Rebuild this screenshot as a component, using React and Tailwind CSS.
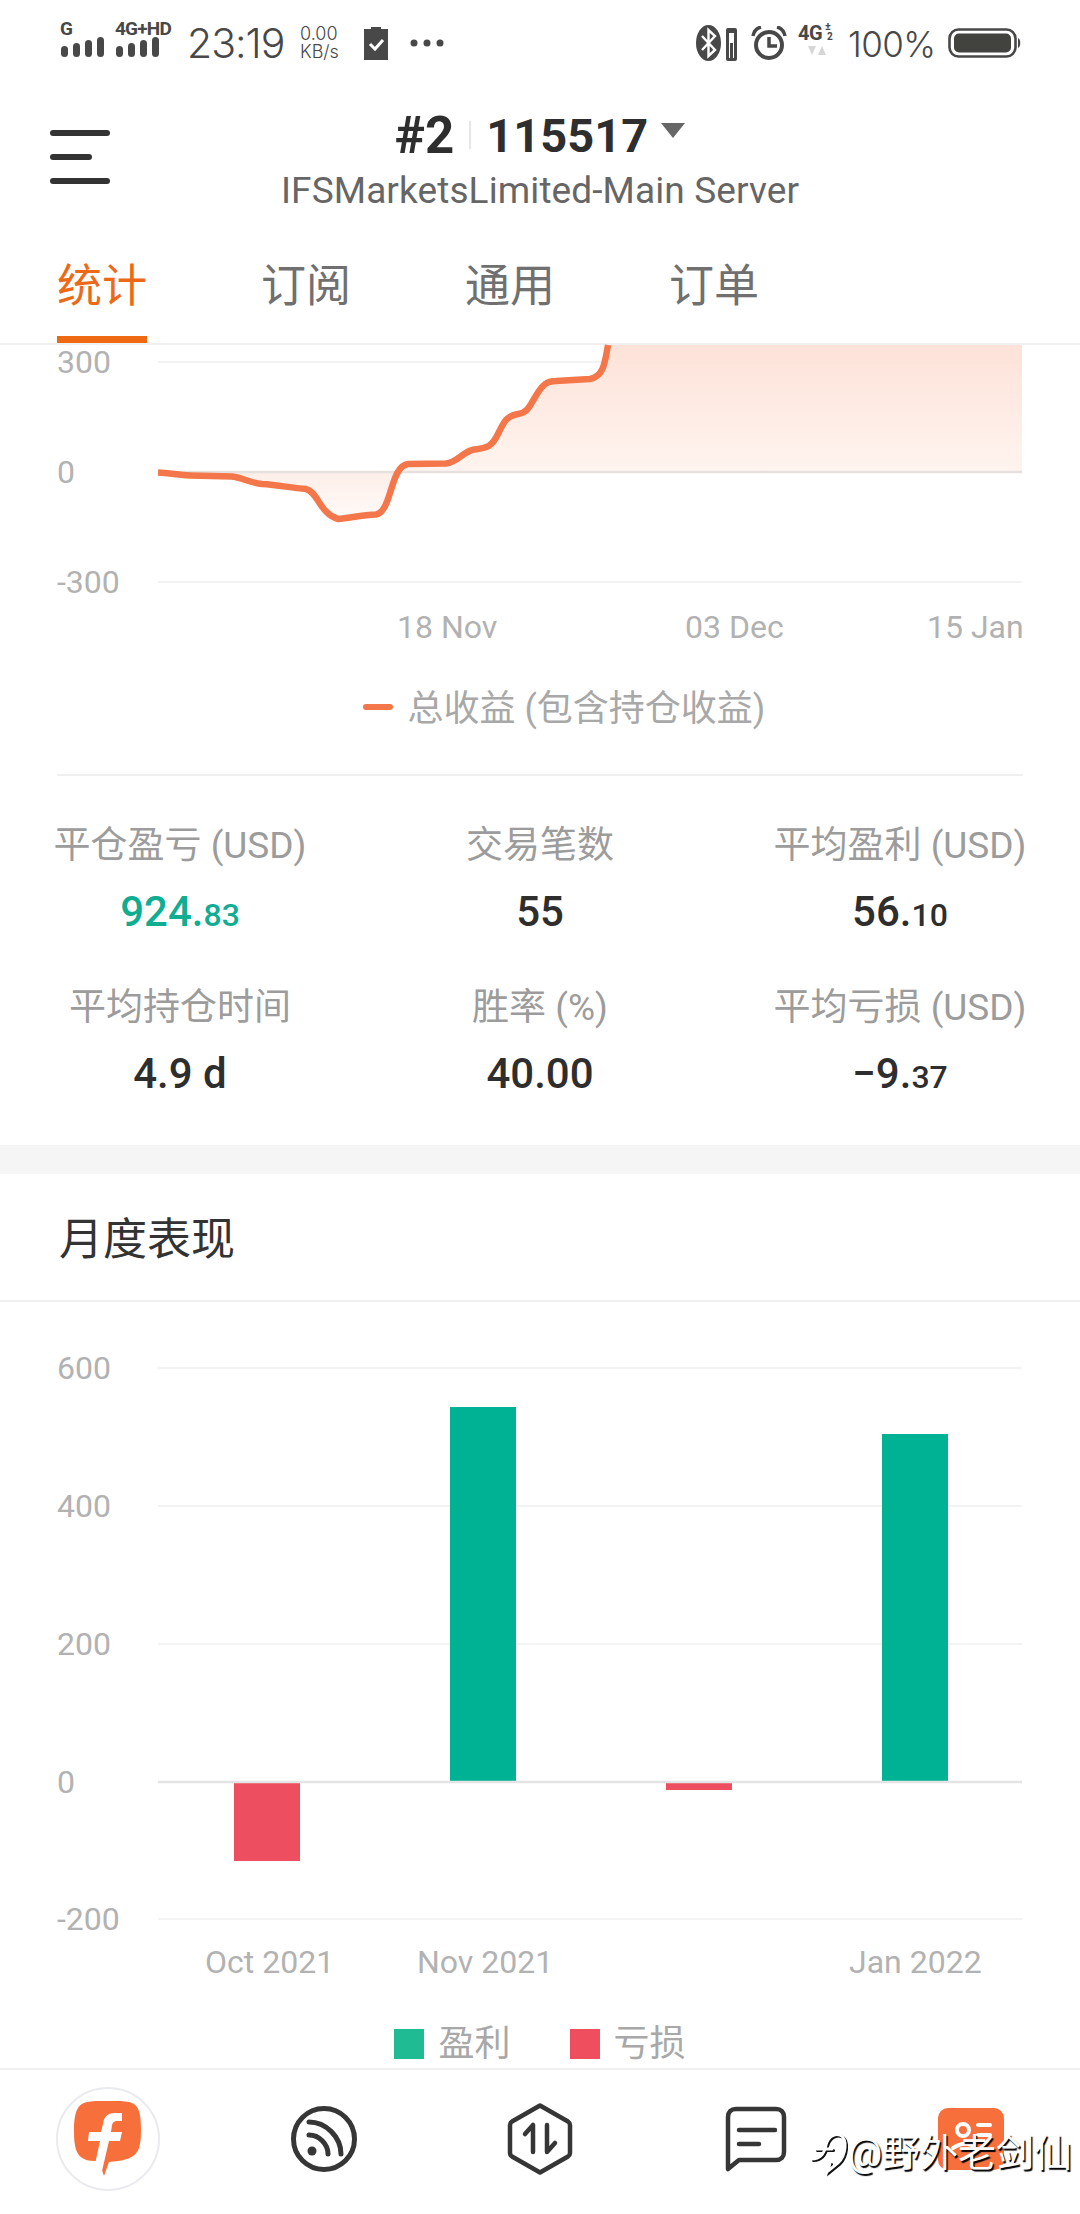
const font = "font-['Roboto','Noto_Sans_CJK_SC',sans-serif]";

const tabs = ["统计", "订阅", "通用", "订单"];

const stats = [
  { label: "平仓盈亏 (USD)", big: "924.", small: "83", green: true },
  { label: "交易笔数", big: "55" },
  { label: "平均盈利 (USD)", big: "56.", small: "10" },
  { label: "平均持仓时间", big: "4.9 d" },
  { label: "胜率 (%)", big: "40.00" },
  { label: "平均亏损 (USD)", big: "−9.", small: "37" },
];

const curve =
  "M158 472.5 C170 473 178 475 190 475.5 L232 476.5 C244 478 250 483 262 484 C280 485 290 488 306 489 C318 492 320 514 338 519 C350 518 362 515 376 514.5 C392 512 390 466 408 464 L446 463.5 C458 462 462 452 474 449.5 C488 448 492 446 498 434 C504 422 506 416 518 414 C528 413 530 405 537 394 C542 386 546 381 556 381 L590 379 C604 376 605 362 608 345";

function Signal({ x }) {
  return (
    <g fill="#484848">
      {[0, 1, 2, 3].map((i) => (
        <rect key={i} x={x + i * 12} y={46 - i * 3} width="7" height={11 + i * 3} rx="3.5" />
      ))}
    </g>
  );
}

function StatusBar() {
  return (
    <div className="h-[80px] flex items-center justify-between text-[#484848] shrink-0">
      <div className="flex items-center h-full">
        <div className="relative w-[187px] h-full">
          <svg className="absolute inset-0" width="187" height="80">
            <Signal x={61} />
            <Signal x={116} />
          </svg>
          <span className="absolute left-[60px] top-[19px] text-[19px] leading-[20px] font-bold">G</span>
          <span className="absolute left-[115px] top-[19px] text-[19px] leading-[20px] font-bold tracking-[-0.8px]">4G+HD</span>
        </div>
        <span className="text-[41px] leading-none w-[113px] font-['Inter',sans-serif] font-light tracking-[-1px] mt-[6px]">23:19</span>
        <div className="w-[64px] mt-[5px] text-[18px] leading-[18px] font-['Inter',sans-serif] font-light">
          <div>0.00</div>
          <div>KB/s</div>
        </div>
        <svg width="24" height="34" viewBox="0 0 24 34" className="mt-[6px]">
          <path d="M0 3h7V1h10v2h7v31H0z" fill="#484848" />
          <path d="M6 18l5 5 8-9" fill="none" stroke="#fff" strokeWidth="3" />
        </svg>
        <svg width="34" height="8" viewBox="0 0 34 8" className="ml-[22px] mt-[6px]">
          <circle cx="4" cy="4" r="3.5" fill="#484848" />
          <circle cx="17" cy="4" r="3.5" fill="#484848" />
          <circle cx="30" cy="4" r="3.5" fill="#484848" />
        </svg>
      </div>
      <div className="flex items-center h-full pr-[56px]">
        <svg width="42" height="36" viewBox="0 0 42 36" className="mt-[6px]">
          <ellipse cx="12.5" cy="18" rx="12.5" ry="18" fill="#484848" />
          <path d="M6 11l13 14-6.5 6V5l6.5 6L6 25" fill="none" stroke="#fff" strokeWidth="2.4" />
          <rect x="30" y="3" width="11" height="33" rx="2" fill="#484848" />
          <rect x="33" y="8" width="5" height="25" fill="#fff" />
          <rect x="34" y="18" width="3" height="15" fill="#484848" />
        </svg>
        <svg width="36" height="34" viewBox="0 0 36 34" className="ml-[13px] mt-[6px]">
          <circle cx="18" cy="19" r="13" fill="none" stroke="#484848" strokeWidth="4" />
          <path d="M18 11v9h8" fill="none" stroke="#484848" strokeWidth="3.5" />
          <path d="M2 10C3 5 6 2 10 1M34 10C33 5 30 2 26 1" fill="none" stroke="#484848" strokeWidth="3.5" />
        </svg>
        <div className="relative w-[36px] h-[36px] ml-[11px] mt-[2px]">
          <span className="absolute left-0 top-0 text-[20px] leading-[20px] font-bold tracking-[-0.5px]">4G</span>
          <span className="absolute left-[27px] -top-[2px] text-[11px] leading-[12px] font-bold">±</span>
          <span className="absolute left-[29px] top-[9px] text-[10px] leading-[10px] font-bold">2</span>
          <svg width="18" height="10" viewBox="0 0 18 10" className="absolute left-[10px] top-[23px]">
            <path d="M0 0h8l-4 9zM10 9l4-9 4 9z" fill="#d6d6d6" />
          </svg>
        </div>
        <span className="ml-[14px] w-[100px] text-[35px] leading-none font-['Inter',sans-serif] font-light tracking-[-0.6px] mt-[8px]">100%</span>
        <svg width="76" height="32" viewBox="0 0 76 32" className="mt-[8px]">
          <rect x="1.5" y="1.5" width="66" height="27" rx="9" fill="none" stroke="#484848" strokeWidth="2.6" />
          <rect x="6" y="5.5" width="57" height="19" rx="5" fill="#42433e" />
          <path d="M70 10c3 1 3 9 0 10z" fill="#484848" />
        </svg>
      </div>
    </div>
  );
}

function Header() {
  return (
    <div className="relative h-[160px] shrink-0 flex flex-col items-center">
      <div className="absolute left-[50px] top-[50px] flex flex-col gap-[18px]">
        <div className="w-[60px] h-[6px] rounded-full bg-[#333]" />
        <div className="w-[42px] h-[6px] rounded-full bg-[#333]" />
        <div className="w-[60px] h-[6px] rounded-full bg-[#333]" />
      </div>
      <div className="flex items-center h-[60px] mt-[25px] text-[#2e2e2e] text-[47px] font-bold leading-none">
        <span className="text-[51px]">#2</span>
        <div className="w-[2px] h-[28px] bg-[#e6e6e6] mx-[15px]" />
        <span>115517</span>
        <div className="ml-[13px] -mt-[10px] w-0 h-0 border-x-[12px] border-x-transparent border-t-[15px] border-t-[#666]" />
      </div>
      <div className="text-[#666] text-[37px] leading-[44px] mt-[4px] tracking-[0.1px]">IFSMarketsLimited-Main Server</div>
    </div>
  );
}

function Tabs() {
  return (
    <div className="h-[105px] shrink-0 border-b-2 border-[#f0f0f0] flex pl-[57px] gap-[114px]">
      {tabs.map((tab, i) => (
        <div key={tab} className={`relative w-[90px] h-[104px] text-[45px] text-center leading-[94px] ${i === 0 ? "text-[#ec6a17]" : "text-[#707070]"}`}>
          {tab}
          {i === 0 && <div className="absolute left-0 right-0 bottom-[1px] h-[7px] bg-[#ee6a12]" />}
        </div>
      ))}
    </div>
  );
}

function EquityChart() {
  const label = { fontSize: 32, fill: "#b2b2b2" };
  return (
    <svg className="block w-[1080px] h-[315px] overflow-visible" viewBox="0 345 1080 315">
      <defs>
        <linearGradient id="fillUp" gradientUnits="userSpaceOnUse" x1="0" y1="345" x2="0" y2="472">
          <stop offset="0" stopColor="#fde0d6" />
          <stop offset="1" stopColor="#fff3ee" />
        </linearGradient>
        <linearGradient id="fillDown" gradientUnits="userSpaceOnUse" x1="0" y1="472" x2="0" y2="522">
          <stop offset="0" stopColor="#fdeee8" />
          <stop offset="1" stopColor="#fffbfa" />
        </linearGradient>
        <clipPath id="above"><rect x="158" y="345" width="864" height="127" /></clipPath>
        <clipPath id="below"><rect x="158" y="472" width="864" height="60" /></clipPath>
      </defs>
      <path d="M158 362H1022M158 582H1022" stroke="#f3f3f3" strokeWidth="2" />
      <path d={`${curve} L1022 345 L1022 472 L158 472 Z`} fill="url(#fillUp)" fillOpacity="0.93" clipPath="url(#above)" />
      <path d={`${curve} L1022 345 L1022 472 L158 472 Z`} fill="url(#fillDown)" clipPath="url(#below)" />
      <path d="M158 472H1022" stroke="#e6e0de" strokeWidth="2.5" />
      <path d={curve} fill="none" stroke="#f3774a" strokeWidth="6.5" strokeLinejoin="round" />
      <text x="57" y="373" {...label}>300</text>
      <text x="57" y="483" {...label}>0</text>
      <text x="57" y="593" {...label}>-300</text>
      <text x="397" y="638" {...label}>18 Nov</text>
      <text x="685" y="638" {...label}>03 Dec</text>
      <text x="927" y="638" {...label}>15 Jan</text>
    </svg>
  );
}

function MonthlyChart() {
  const label = { fontSize: 32, fill: "#b2b2b2" };
  const ticks = [
    { y: 1367, t: "600" },
    { y: 1505, t: "400" },
    { y: 1643, t: "200" },
    { y: 1918, t: "-200" },
  ];
  return (
    <svg className="block w-[1080px] h-[699px]" viewBox="0 1301 1080 699">
      {ticks.map((tick) => (
        <g key={tick.t}>
          <path d={`M158 ${tick.y}H1022`} stroke="#f3f3f3" strokeWidth="2" />
          <text x="57" y={tick.y + 11} {...label}>{tick.t}</text>
        </g>
      ))}
      <text x="57" y="1792" {...label}>0</text>
      <rect x="450" y="1406" width="66" height="375" fill="#00b294" />
      <rect x="882" y="1433" width="66" height="348" fill="#00b294" />
      <rect x="234" y="1781" width="66" height="79" fill="#ee4f60" />
      <rect x="666" y="1781" width="66" height="8" fill="#ee4f60" />
      <path d="M158 1781H1022" stroke="#e4e4e4" strokeWidth="2.5" />
      <text x="205" y="1972" {...label}>Oct 2021</text>
      <text x="417" y="1972" {...label}>Nov 2021</text>
      <text x="849" y="1972" {...label}>Jan 2022</text>
    </svg>
  );
}

function Stat({ label, big, small, green }) {
  return (
    <div className="flex flex-col items-center">
      <div className="h-[50px] text-[37px] leading-[52px] text-[#9c9c9c] whitespace-nowrap">{label}</div>
      <div className={`h-[60px] mt-[12px] leading-[60px] font-medium ${green ? "text-[#0fae92]" : "text-[#2e2e2e]"}`}>
        <span className="text-[42px]">{big}</span>
        {small && <span className="text-[32px]">{small}</span>}
      </div>
    </div>
  );
}

function Content() {
  return (
    <div className="flex-1">
      <EquityChart />
      <div className="h-[114px] flex items-start justify-center pt-[24px] pl-[48px]">
        <div className="w-[30px] h-[6px] rounded-full bg-[#f3774a] mt-[20px]" />
        <span className="ml-[15px] text-[36px] leading-[50px] text-[#a8a8a8]">总收益 (包含持仓收益)</span>
      </div>
      <div className="mx-[57px] h-[2px] bg-[#f0f0f0]" />
      <div className="grid grid-cols-3 gap-y-[40px] pt-[44px] pb-[41px]">
        {stats.map((s) => (
          <Stat key={s.label} {...s} />
        ))}
      </div>
      <div className="h-[29px] bg-[#f5f5f5]" />
      <div className="h-[128px] border-b-2 border-[#f0f0f0] pl-[59px] pt-[5px] flex items-center text-[44px] text-[#333]">月度表现</div>
      <MonthlyChart />
      <div className="flex items-center justify-center mt-[25px] h-[36px] text-[36px] text-[#a8a8a8]">
        <div className="w-[30px] h-[30px] bg-[#1fbc94]" />
        <span className="ml-[14px]">盈利</span>
        <div className="w-[30px] h-[30px] bg-[#ef4e5e] ml-[59px]" />
        <span className="ml-[14px]">亏损</span>
      </div>
    </div>
  );
}

function BottomNav() {
  return (
    <div className="h-[146px] shrink-0 border-t-2 border-[#f0f0f0] grid grid-cols-5 items-center pb-[6px] bg-white">
      <div className="flex justify-center">
        <div className="w-[104px] h-[104px] rounded-full border-2 border-[#e9ebef] flex items-center justify-center">
          <svg width="70" height="76" viewBox="0 0 70 76">
            <path d="M14 1C26 -1 44 -1 56 1C65 3 68 10 68 28C68 46 66 54 54 58C48 60 42 60 36 61L31 75L26 60C20 60 15 60 11 58C3 54 1 46 1 30C1 10 5 3 14 1Z" fill="#f7703c" />
            <path d="M49 12H42C34 12 31 16 30 23L28 31H16L15 40H27L21 68L29 70L36 40H47L49 31H38L39 24C40 21 41 20 44 20H49Z" fill="#fff" />
          </svg>
        </div>
      </div>
      <div className="flex justify-center">
        <svg width="68" height="68" viewBox="0 0 68 68" fill="none" stroke="#363636" strokeLinecap="round">
          <circle cx="34" cy="34" r="30.5" strokeWidth="5" />
          <path d="M19 17C36 17 51 32 51 49" strokeWidth="5" />
          <path d="M19 30C29 30 38 39 38 49" strokeWidth="5" />
          <circle cx="22" cy="46" r="4.5" fill="#363636" stroke="none" />
        </svg>
      </div>
      <div className="flex justify-center">
        <svg width="66" height="72" viewBox="0 0 66 72" fill="none" stroke="#363636" strokeWidth="4.5" strokeLinecap="round" strokeLinejoin="round">
          <path d="M33 2.5L61 18.5C62.5 19.5 63 20.5 63 22V50C63 51.5 62.5 52.5 61 53.5L33 69.5L5 53.5C3.5 52.5 3 51.5 3 50V22C3 20.5 3.5 19.5 5 18.5Z" />
          <path d="M18 31L26 22V49" />
          <path d="M40 22V49L48 40" />
        </svg>
      </div>
      <div className="flex justify-center">
        <svg width="62" height="66" viewBox="0 0 62 66" fill="none" stroke="#363636" strokeWidth="4.5" strokeLinecap="round" strokeLinejoin="round">
          <path d="M11 3H51C56 3 59 6 59 11V46C59 51 56 54 51 54H14L3 63V11C3 6 6 3 11 3Z" />
          <path d="M14 24H50M14 38H34" />
        </svg>
      </div>
      <div className="flex justify-center">
        <div className="relative w-[66px] h-[62px] rounded-[10px] bg-[#f7703c] ml-[-2px]">
          <svg width="66" height="62" viewBox="0 0 66 62" fill="none" stroke="#fff" strokeWidth="4" strokeLinecap="round">
            <circle cx="25" cy="22" r="6" />
            <path d="M40 17H52M40 27H52M15 40C24 34 32 35 38 40" />
          </svg>
        </div>
      </div>
    </div>
  );
}

export default function App() {
  return (
    <div className={`relative w-[1080px] h-[2214px] overflow-hidden bg-white flex flex-col ${font}`}>
      <StatusBar />
      <Header />
      <Tabs />
      <Content />
      <BottomNav />
      {/* platform watermark sits over the nav */}
      <div className="absolute left-[810px] top-[2128px] flex items-center text-white text-[38px] leading-[50px] [text-shadow:1.5px_1.5px_1px_#000] whitespace-nowrap">
        <svg width="38" height="48" viewBox="0 0 38 48" fill="none" strokeWidth="3" strokeLinecap="round">
          <g stroke="#111" transform="translate(1.5 1.5)">
            <path d="M2 30C10 30 14 26 16 16C18 8 24 4 30 6C38 10 36 26 28 34L18 42L20 34" />
            <path d="M6 20H22" />
          </g>
          <g stroke="#fff">
            <path d="M2 30C10 30 14 26 16 16C18 8 24 4 30 6C38 10 36 26 28 34L18 42L20 34" />
            <path d="M6 20H22" />
          </g>
        </svg>
        <span>@野外老剑仙</span>
      </div>
    </div>
  );
}
